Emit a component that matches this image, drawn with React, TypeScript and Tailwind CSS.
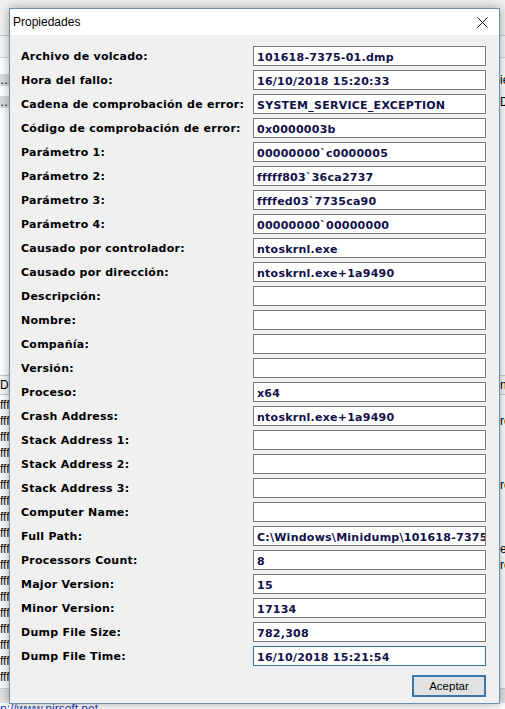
import React from "react";

const rows: [string, string][] = [
  ["Archivo de volcado:", "101618-7375-01.dmp"],
  ["Hora del fallo:", "16/10/2018 15:20:33"],
  ["Cadena de comprobación de error:", "SYSTEM_SERVICE_EXCEPTION"],
  ["Código de comprobación de error:", "0x0000003b"],
  ["Parámetro 1:", "00000000`c0000005"],
  ["Parámetro 2:", "fffff803`36ca2737"],
  ["Parámetro 3:", "ffffed03`7735ca90"],
  ["Parámetro 4:", "00000000`00000000"],
  ["Causado por controlador:", "ntoskrnl.exe"],
  ["Causado por dirección:", "ntoskrnl.exe+1a9490"],
  ["Descripción:", ""],
  ["Nombre:", ""],
  ["Compañía:", ""],
  ["Versión:", ""],
  ["Proceso:", "x64"],
  ["Crash Address:", "ntoskrnl.exe+1a9490"],
  ["Stack Address 1:", ""],
  ["Stack Address 2:", ""],
  ["Stack Address 3:", ""],
  ["Computer Name:", ""],
  ["Full Path:", "C:\\Windows\\Minidump\\101618-7375-01.dmp"],
  ["Processors Count:", "8"],
  ["Major Version:", "15"],
  ["Minor Version:", "17134"],
  ["Dump File Size:", "782,308"],
  ["Dump File Time:", "16/10/2018 15:21:54"],
];

const lowerRight = ["", "rcl", "", "", "", "rcl", "", "", "", "erc", "rcl", "", "", "", "", "", "", ""];

function Background() {
  return (
    <div className="flex flex-col h-full font-['Liberation_Sans',sans-serif] text-[12px] text-black">
      <div className="h-[36px] bg-[#f0f0f0] border-b border-[#c8c8c8]" />
      <div className="h-[22px] bg-[#f7f7f7] border-b border-[#d6d6d6]" />
      <div className="h-[317px] bg-white pt-[11px] flex flex-col">
        <div className="h-[22px] flex items-center justify-between">
          <span className="w-[9px] overflow-hidden whitespace-nowrap text-right bg-[#dcdcdc] leading-[12px]">…</span>
          <span className="w-[5px] overflow-hidden whitespace-nowrap leading-[12px]">ies</span>
        </div>
        <div className="h-[22px] flex items-center justify-between">
          <span className="w-[9px] overflow-hidden whitespace-nowrap text-right bg-[#dcdcdc] leading-[12px]">…</span>
          <span className="w-[5px] overflow-hidden whitespace-nowrap leading-[12px]">D</span>
        </div>
      </div>
      <div className="h-[20px] bg-[#f7f7f7] border-y border-[#c8c8c8] flex items-center justify-between">
        <span className="w-[9px] overflow-hidden whitespace-nowrap">Di</span>
        <span className="w-[5px] overflow-hidden whitespace-nowrap">n</span>
      </div>
      <div className="flex-1 bg-white flex flex-col pt-[2px] overflow-hidden">
        {lowerRight.map((r, i) => (
          <div key={i} className="h-[16px] shrink-0 flex items-center justify-between">
            <span className="w-[9px] overflow-hidden whitespace-nowrap">fffff</span>
            <span className="w-[5px] overflow-hidden whitespace-nowrap">{r}</span>
          </div>
        ))}
      </div>
      <div className="h-[15px] bg-[#e3e3e3] border-t border-[#cfcfcf]" />
      <div className="h-[6px] bg-white overflow-visible leading-[12px]">
        <span className="text-[#1a3fb8] underline whitespace-nowrap">p://www.nirsoft.net</span>
      </div>
    </div>
  );
}

function Dialog() {
  return (
    <div className="absolute left-[9px] top-[8px] w-[491px] border border-[#6f8fae] bg-[#f0f0f0] shadow-[0_0_10px_rgba(0,0,0,0.35)] flex flex-col">
      <div className="h-[26px] bg-white flex items-center justify-between pl-[3px] pr-[10px]">
        <span className="font-['Liberation_Sans',sans-serif] text-[12px] text-black">Propiedades</span>
        <svg width="11" height="11" viewBox="0 0 11 11" className="mr-[1px]">
          <path d="M0.5 0.5 L10.5 10.5 M10.5 0.5 L0.5 10.5" stroke="#111" strokeWidth="1" fill="none" />
        </svg>
      </div>
      <div className="flex flex-col pt-[11px] pl-[11px] pr-[13px] pb-[6px] font-['DejaVu_Sans',sans-serif] font-bold text-[11px] tracking-[0.25px]">
        <div className="flex flex-col gap-[4px]">
          {rows.map(([label, value], i) => {
            const last = i === rows.length - 1;
            return (
              <div key={i} className="flex items-center h-[20px]">
                <div className="w-[232px] shrink-0 text-black whitespace-nowrap pt-[3px]">{label}</div>
                <div
                  className={
                    last
                      ? "w-[234px] h-[20px] bg-white border border-[#3a6f9c] pl-[3px] overflow-hidden whitespace-nowrap leading-[21px] text-[#10104a]"
                      : "w-[234px] h-[20px] bg-white border border-[#7a7a7a] pl-[3px] overflow-hidden whitespace-nowrap leading-[21px] text-[#10104a]"
                  }
                >
                  {value}
                </div>
              </div>
            );
          })}
        </div>
        <div className="flex justify-end mt-[9px]">
          <button className="w-[74px] h-[22px] border-2 border-[#3a78ad] bg-[#e1e1e1] font-['Liberation_Sans',sans-serif] font-normal tracking-normal text-[11.5px] text-black leading-[18px]">
            Aceptar
          </button>
        </div>
      </div>
    </div>
  );
}

export default function App() {
  return (
    <div className="relative w-[505px] h-[709px] overflow-hidden bg-white">
      <Background />
      <Dialog />
    </div>
  );
}
